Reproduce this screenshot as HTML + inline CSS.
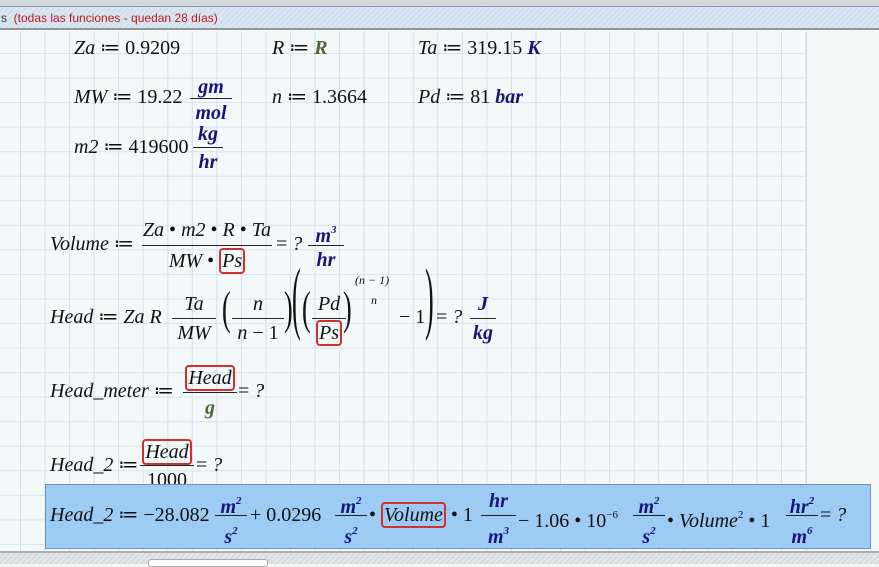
<!DOCTYPE html>
<html><head><meta charset="utf-8"><style>
*{margin:0;padding:0;box-sizing:border-box}
body{width:879px;height:564px;overflow:hidden;position:relative;background:#f3f8f6;font-family:"Liberation Serif",serif;font-size:20px;color:#111}
#top{position:absolute;left:0;top:0;width:879px;height:7px;background:#d4d9dc;border-bottom:1px solid #8899aa}
#hdr{position:absolute;left:0;top:7px;width:879px;height:23px;background:repeating-linear-gradient(135deg,#dbe7f4 0 2px,#cfdeee 2px 4px);border-bottom:2px solid #8e959b;font-family:"Liberation Sans",sans-serif;font-size:12px;color:#c01818;padding:4px 0 0 1px}
#hdr span{color:#333}
#grid{position:absolute;left:0;top:32px;width:807px;height:520px;background-color:#f3f8f8;
background-image:linear-gradient(to right,#cfe0ec 1px,transparent 1px),linear-gradient(to bottom,#d6e4ee 1px,transparent 1px);
background-size:24.55px 24.55px;background-position:20px 21px;border-right:1px solid #d0dce4}
#bot{position:absolute;left:0;top:551px;width:879px;height:13px;background:repeating-linear-gradient(135deg,#e4e6e8 0 2px,#d8dbde 2px 4px);border-top:2px solid #a9b0b5}
#tab{position:absolute;left:148px;top:559px;width:120px;height:8px;background:#fff;border:1px solid #aaa;border-radius:3px}
.m{position:absolute;white-space:nowrap;line-height:20px}
.c{text-align:center}
.bar{position:absolute;height:1px;background:#222}
i{font-style:italic}
.u{color:#15157a;font-weight:bold;font-style:italic}
.g{color:#4a6a30;font-weight:bold;font-style:italic}
.box{border:2px solid #d03030;border-radius:4px;padding:0 1px}
sup{font-size:11px;vertical-align:9px}
#sel{position:absolute;left:45px;top:484px;width:826px;height:65px;background:#9ecbf3;border:1px solid #6b93bb}
.pa{position:absolute;font-weight:100;transform-origin:center}
</style></head><body>
<div id="top"></div>
<div id="hdr"><span>s</span>&nbsp; (todas las funciones - quedan 28 días)</div>
<div id="grid"></div>
<div id="bot"></div><div id="tab"></div>

<div class="m" style="left:74px;top:38px"><i>Za</i> ≔ 0.9209</div>
<div class="m" style="left:272px;top:38px"><i>R</i> ≔ <span class="g">R</span></div>
<div class="m" style="left:418px;top:38px"><i>Ta</i> ≔ 319.15 <span class="u">K</span></div>

<div class="m" style="left:74px;top:87px"><i>MW</i> ≔ 19.22</div>
<div class="m u c" style="left:190px;top:77px;width:42px">gm</div>
<div class="bar" style="left:190px;top:98px;width:42px"></div>
<div class="m u c" style="left:190px;top:103px;width:42px">mol</div>
<div class="m" style="left:272px;top:87px"><i>n</i> ≔ 1.3664</div>
<div class="m" style="left:418px;top:87px"><i>Pd</i> ≔ 81 <span class="u">bar</span></div>

<div class="m" style="left:74px;top:137px"><i>m2</i> ≔ 419600</div>
<div class="m u c" style="left:193px;top:124px;width:30px">kg</div>
<div class="bar" style="left:193px;top:147px;width:30px"></div>
<div class="m u c" style="left:193px;top:152px;width:30px">hr</div>

<div class="m" style="left:50px;top:234px"><i>Volume</i> ≔</div>
<div class="m c" style="left:142px;top:220px;width:130px"><i>Za</i> • <i>m2</i> • <i>R</i> • <i>Ta</i></div>
<div class="bar" style="left:142px;top:245px;width:130px"></div>
<div class="m c" style="left:142px;top:251px;width:130px"><i>MW</i> • <i class="box">Ps</i></div>
<div class="m" style="left:276px;top:234px">= <i>?</i></div>
<div class="m u c" style="left:308px;top:220px;width:36px">m<sup>3</sup></div>
<div class="bar" style="left:308px;top:245px;width:36px"></div>
<div class="m u c" style="left:308px;top:250px;width:36px">hr</div>

<div class="m" style="left:50px;top:307px"><i>Head</i> ≔ <i>Za R</i></div>
<div class="m c" style="left:172px;top:294px;width:44px"><i>Ta</i></div>
<div class="bar" style="left:172px;top:318px;width:44px"></div>
<div class="m c" style="left:172px;top:323px;width:44px"><i>MW</i></div>
<div class="pa" style="left:222px;top:294px;font-size:26px;transform:scaleY(1.8)">(</div>
<div class="m c" style="left:232px;top:294px;width:52px"><i>n</i></div>
<div class="bar" style="left:232px;top:318px;width:52px"></div>
<div class="m c" style="left:232px;top:323px;width:52px"><i>n</i> − 1</div>
<div class="pa" style="left:284px;top:294px;font-size:26px;transform:scaleY(1.8)">)</div>
<div class="pa" style="left:292px;top:284px;font-size:26px;transform:scaleY(3.1)">(</div>
<div class="pa" style="left:302px;top:294px;font-size:26px;transform:scaleY(1.8)">(</div>
<div class="m c" style="left:312px;top:294px;width:34px"><i>Pd</i></div>
<div class="bar" style="left:312px;top:318px;width:34px"></div>
<div class="m c" style="left:312px;top:323px;width:34px"><i class="box">Ps</i></div>
<div class="pa" style="left:343px;top:294px;font-size:26px;transform:scaleY(1.8)">)</div>
<div class="m" style="left:355px;top:270px;font-size:12px"><i>(n − 1)</i></div>
<div class="m" style="left:371px;top:290px;font-size:12px"><i>n</i></div>
<div class="m" style="left:399px;top:307px">− 1</div>
<div class="pa" style="left:425px;top:284px;font-size:26px;transform:scaleY(3.1)">)</div>
<div class="m" style="left:436px;top:307px">= <i>?</i></div>
<div class="m u c" style="left:470px;top:294px;width:26px">J</div>
<div class="bar" style="left:470px;top:318px;width:26px"></div>
<div class="m u c" style="left:470px;top:323px;width:26px">kg</div>

<div class="m" style="left:50px;top:381px"><i>Head_meter</i> ≔</div>
<div class="m c" style="left:183px;top:368px;width:54px"><i class="box">Head</i></div>
<div class="bar" style="left:183px;top:392px;width:54px"></div>
<div class="m g c" style="left:183px;top:398px;width:54px">g</div>
<div class="m" style="left:238px;top:381px">= <i>?</i></div>

<div class="m" style="left:50px;top:455px"><i>Head_2</i> ≔</div>
<div class="m c" style="left:140px;top:442px;width:54px"><i class="box">Head</i></div>
<div class="bar" style="left:140px;top:465px;width:54px"></div>
<div class="m c" style="left:140px;top:470px;width:54px">1000</div>
<div class="m" style="left:196px;top:455px">= <i>?</i></div>

<div id="sel"></div>
<div class="m" style="left:50px;top:505px"><i>Head_2</i> ≔ −28.082</div>
<div class="m u c" style="left:215px;top:491px;width:32px">m<sup>2</sup></div>
<div class="bar" style="left:215px;top:515px;width:32px"></div>
<div class="m u c" style="left:215px;top:521px;width:32px">s<sup>2</sup></div>
<div class="m" style="left:250px;top:505px">+ 0.0296</div>
<div class="m u c" style="left:335px;top:491px;width:32px">m<sup>2</sup></div>
<div class="bar" style="left:335px;top:515px;width:32px"></div>
<div class="m u c" style="left:335px;top:521px;width:32px">s<sup>2</sup></div>
<div class="m" style="left:369px;top:505px">• <i class="box">Volume</i> • 1</div>
<div class="m u c" style="left:481px;top:491px;width:35px">hr</div>
<div class="bar" style="left:481px;top:515px;width:35px"></div>
<div class="m u c" style="left:481px;top:521px;width:35px">m<sup>3</sup></div>
<div class="m" style="left:518px;top:505px">− 1.06 • 10<sup>−6</sup></div>
<div class="m u c" style="left:633px;top:491px;width:32px">m<sup>2</sup></div>
<div class="bar" style="left:633px;top:515px;width:32px"></div>
<div class="m u c" style="left:633px;top:521px;width:32px">s<sup>2</sup></div>
<div class="m" style="left:667px;top:505px">• <i>Volume</i><sup>2</sup> • 1</div>
<div class="m u c" style="left:786px;top:491px;width:32px">hr<sup>2</sup></div>
<div class="bar" style="left:786px;top:515px;width:32px"></div>
<div class="m u c" style="left:786px;top:521px;width:32px">m<sup>6</sup></div>
<div class="m" style="left:820px;top:505px">= <i>?</i></div>
</body></html>
